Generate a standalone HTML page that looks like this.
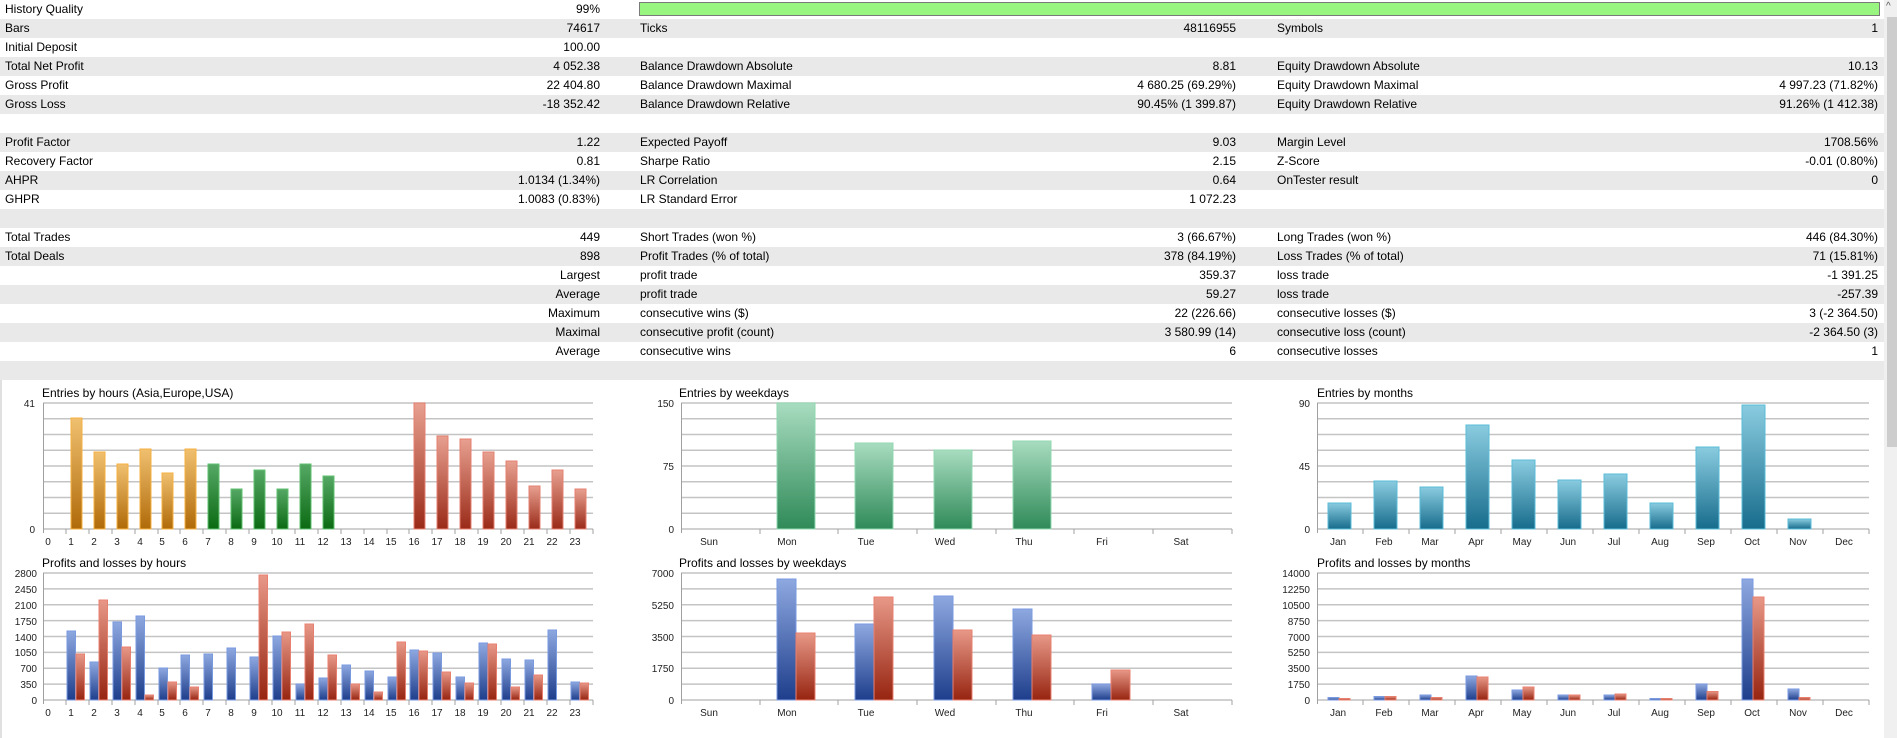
<!DOCTYPE html>
<html><head><meta charset="utf-8">
<style>
html,body{margin:0;padding:0;background:#fff;width:1897px;height:738px;overflow:hidden;font-family:"Liberation Sans",Arial,sans-serif;color:#000}
.tbl{position:absolute;left:0;top:0;width:1884px}
.r{position:relative;height:19px;font-size:12px;line-height:19px}
.r:nth-child(even){background:#e9e9e9}
.r span{position:absolute;white-space:nowrap}
.l1{left:5px}.v1{right:1284px;text-align:right}
.l2{left:640px}.v2{right:648px}
.l3{left:1277px}.v3{right:6px}
.sb{position:absolute;left:1884px;top:0;width:13px;height:738px;background:#f0f0f0}
.th{position:absolute;left:1887px;top:17px;width:10px;height:430px;background:#cdcdcd}
svg text{font-family:"Liberation Sans",Arial,sans-serif}
</style></head><body>
<div class="tbl">
<div class="r"><span class="l1">History Quality</span><span class="v1">99%</span></div>
<div class="r"><span class="l1">Bars</span><span class="v1">74617</span><span class="l2">Ticks</span><span class="v2">48116955</span><span class="l3">Symbols</span><span class="v3">1</span></div>
<div class="r"><span class="l1">Initial Deposit</span><span class="v1">100.00</span></div>
<div class="r"><span class="l1">Total Net Profit</span><span class="v1">4 052.38</span><span class="l2">Balance Drawdown Absolute</span><span class="v2">8.81</span><span class="l3">Equity Drawdown Absolute</span><span class="v3">10.13</span></div>
<div class="r"><span class="l1">Gross Profit</span><span class="v1">22 404.80</span><span class="l2">Balance Drawdown Maximal</span><span class="v2">4 680.25 (69.29%)</span><span class="l3">Equity Drawdown Maximal</span><span class="v3">4 997.23 (71.82%)</span></div>
<div class="r"><span class="l1">Gross Loss</span><span class="v1">-18 352.42</span><span class="l2">Balance Drawdown Relative</span><span class="v2">90.45% (1 399.87)</span><span class="l3">Equity Drawdown Relative</span><span class="v3">91.26% (1 412.38)</span></div>
<div class="r"></div>
<div class="r"><span class="l1">Profit Factor</span><span class="v1">1.22</span><span class="l2">Expected Payoff</span><span class="v2">9.03</span><span class="l3">Margin Level</span><span class="v3">1708.56%</span></div>
<div class="r"><span class="l1">Recovery Factor</span><span class="v1">0.81</span><span class="l2">Sharpe Ratio</span><span class="v2">2.15</span><span class="l3">Z-Score</span><span class="v3">-0.01 (0.80%)</span></div>
<div class="r"><span class="l1">AHPR</span><span class="v1">1.0134 (1.34%)</span><span class="l2">LR Correlation</span><span class="v2">0.64</span><span class="l3">OnTester result</span><span class="v3">0</span></div>
<div class="r"><span class="l1">GHPR</span><span class="v1">1.0083 (0.83%)</span><span class="l2">LR Standard Error</span><span class="v2">1 072.23</span></div>
<div class="r"></div>
<div class="r"><span class="l1">Total Trades</span><span class="v1">449</span><span class="l2">Short Trades (won %)</span><span class="v2">3 (66.67%)</span><span class="l3">Long Trades (won %)</span><span class="v3">446 (84.30%)</span></div>
<div class="r"><span class="l1">Total Deals</span><span class="v1">898</span><span class="l2">Profit Trades (% of total)</span><span class="v2">378 (84.19%)</span><span class="l3">Loss Trades (% of total)</span><span class="v3">71 (15.81%)</span></div>
<div class="r"><span class="v1">Largest</span><span class="l2">profit trade</span><span class="v2">359.37</span><span class="l3">loss trade</span><span class="v3">-1 391.25</span></div>
<div class="r"><span class="v1">Average</span><span class="l2">profit trade</span><span class="v2">59.27</span><span class="l3">loss trade</span><span class="v3">-257.39</span></div>
<div class="r"><span class="v1">Maximum</span><span class="l2">consecutive wins ($)</span><span class="v2">22 (226.66)</span><span class="l3">consecutive losses ($)</span><span class="v3">3 (-2 364.50)</span></div>
<div class="r"><span class="v1">Maximal</span><span class="l2">consecutive profit (count)</span><span class="v2">3 580.99 (14)</span><span class="l3">consecutive loss (count)</span><span class="v3">-2 364.50 (3)</span></div>
<div class="r"><span class="v1">Average</span><span class="l2">consecutive wins</span><span class="v2">6</span><span class="l3">consecutive losses</span><span class="v3">1</span></div>
<div class="r"></div>
</div>
<div style="position:absolute;left:639px;top:2px;width:1239px;height:12px;background:#98f57f;border:1px solid #7a7a7a"></div>
<div class="sb"></div><div class="th"></div>
<div style="position:absolute;left:1886px;top:1px;font-size:10px;color:#555">^</div>

<svg width="1884" height="738" style="position:absolute;left:0;top:0" xmlns="http://www.w3.org/2000/svg">
<defs>
<linearGradient id="go" x1="0" y1="0" x2="0" y2="1"><stop offset="0" stop-color="#f0c070"/><stop offset="1" stop-color="#b06a08"/></linearGradient>
<linearGradient id="gg" x1="0" y1="0" x2="0" y2="1"><stop offset="0" stop-color="#55a865"/><stop offset="1" stop-color="#0b6a12"/></linearGradient>
<linearGradient id="gr" x1="0" y1="0" x2="0" y2="1"><stop offset="0" stop-color="#e8a090"/><stop offset="1" stop-color="#9a2a18"/></linearGradient>
<linearGradient id="gb" x1="0" y1="0" x2="0" y2="1"><stop offset="0" stop-color="#8ea8e0"/><stop offset="1" stop-color="#1e3e8c"/></linearGradient>
<linearGradient id="gl" x1="0" y1="0" x2="0" y2="1"><stop offset="0" stop-color="#e89888"/><stop offset="1" stop-color="#962410"/></linearGradient>
<linearGradient id="gw" x1="0" y1="0" x2="0" y2="1"><stop offset="0" stop-color="#a8dcc0"/><stop offset="1" stop-color="#2f8a58"/></linearGradient>
<linearGradient id="gt" x1="0" y1="0" x2="0" y2="1"><stop offset="0" stop-color="#8acce0"/><stop offset="1" stop-color="#176c8c"/></linearGradient>
</defs>
<line x1="1" y1="380" x2="1" y2="738" stroke="#e0e0e0" stroke-width="2"/>

<g stroke="#c4c4c4" stroke-width="1.5">
<path d="M43 403H593M43 418.75H593M43 434.5H593M43 450.25H593M43 466H593M43 481.75H593M43 497.5H593M43 513.25H593"/>
<path d="M681 403H1232M681 418.75H1232M681 434.5H1232M681 450.25H1232M681 466H1232M681 481.75H1232M681 497.5H1232M681 513.25H1232"/>
<path d="M1317 403H1869M1317 418.75H1869M1317 434.5H1869M1317 450.25H1869M1317 466H1869M1317 481.75H1869M1317 497.5H1869M1317 513.25H1869"/>
<path d="M43 573H593M43 588.9H593M43 604.75H593M43 620.6H593M43 636.5H593M43 652.4H593M43 668.25H593M43 684.1H593"/>
<path d="M681 573H1232M681 588.9H1232M681 604.75H1232M681 620.6H1232M681 636.5H1232M681 652.4H1232M681 668.25H1232M681 684.1H1232"/>
<path d="M1317 573H1869M1317 588.9H1869M1317 604.75H1869M1317 620.6H1869M1317 636.5H1869M1317 652.4H1869M1317 668.25H1869M1317 684.1H1869"/>
</g>
<g stroke="#a0a0a0" stroke-width="1" fill="none">
<path d="M43.5 403V533M43 529H593M681.5 403V533M681 529H1232M1317.5 403V533M1317 529H1869"/>
<path d="M43.5 573V704M43 700H593M681.5 573V704M681 700H1232M1317.5 573V704M1317 700H1869"/>
<path d="M66 529v5M89 529v5M112 529v5M135 529v5M158 529v5M180 529v5M203 529v5M226 529v5M249 529v5M272 529v5M295 529v5M318 529v5M341 529v5M364 529v5M387 529v5M409 529v5M432 529v5M455 529v5M478 529v5M501 529v5M524 529v5M547 529v5M570 529v5M593 529v5"/>
<path d="M66 700v5M89 700v5M112 700v5M135 700v5M158 700v5M180 700v5M203 700v5M226 700v5M249 700v5M272 700v5M295 700v5M318 700v5M341 700v5M364 700v5M387 700v5M409 700v5M432 700v5M455 700v5M478 700v5M501 700v5M524 700v5M547 700v5M570 700v5M593 700v5"/>
<path d="M760 529v5M838 529v5M917 529v5M996 529v5M1074 529v5M1153 529v5M1232 529v5M760 700v5M838 700v5M917 700v5M996 700v5M1074 700v5M1153 700v5M1232 700v5"/>
<path d="M1363 529v5M1409 529v5M1455 529v5M1501 529v5M1547 529v5M1593 529v5M1639 529v5M1685 529v5M1731 529v5M1777 529v5M1823 529v5M1869 529v5M1363 700v5M1409 700v5M1455 700v5M1501 700v5M1547 700v5M1593 700v5M1639 700v5M1685 700v5M1731 700v5M1777 700v5M1823 700v5M1869 700v5"/>
</g>

<g font-size="12" fill="#000">
<text x="42" y="397">Entries by hours (Asia,Europe,USA)</text>
<text x="679" y="397">Entries by weekdays</text>
<text x="1317" y="397">Entries by months</text>
<text x="42" y="567">Profits and losses by hours</text>
<text x="679" y="567">Profits and losses by weekdays</text>
<text x="1317" y="567">Profits and losses by months</text>
</g>

<g font-size="10" fill="#222" text-anchor="end">
<text x="35" y="407">41</text><text x="35" y="533">0</text>
<text x="674" y="407">150</text><text x="674" y="470">75</text><text x="674" y="533">0</text>
<text x="1310" y="407">90</text><text x="1310" y="470">45</text><text x="1310" y="533">0</text>
<text x="37" y="577">2800</text><text x="37" y="593">2450</text><text x="37" y="609">2100</text><text x="37" y="625">1750</text><text x="37" y="641">1400</text><text x="37" y="656">1050</text><text x="37" y="672">700</text><text x="37" y="688">350</text><text x="37" y="704">0</text>
<text x="674" y="577">7000</text><text x="674" y="609">5250</text><text x="674" y="641">3500</text><text x="674" y="672">1750</text><text x="674" y="704">0</text>
<text x="1310" y="577">14000</text><text x="1310" y="593">12250</text><text x="1310" y="609">10500</text><text x="1310" y="625">8750</text><text x="1310" y="641">7000</text><text x="1310" y="656">5250</text><text x="1310" y="672">3500</text><text x="1310" y="688">1750</text><text x="1310" y="704">0</text>
</g>

<g font-size="10" fill="#222" text-anchor="middle">
<g>
<text x="48" y="545">0</text><text x="71" y="545">1</text><text x="94" y="545">2</text><text x="117" y="545">3</text><text x="140" y="545">4</text><text x="162" y="545">5</text><text x="185" y="545">6</text><text x="208" y="545">7</text><text x="231" y="545">8</text><text x="254" y="545">9</text><text x="277" y="545">10</text><text x="300" y="545">11</text><text x="323" y="545">12</text><text x="346" y="545">13</text><text x="369" y="545">14</text><text x="391" y="545">15</text><text x="414" y="545">16</text><text x="437" y="545">17</text><text x="460" y="545">18</text><text x="483" y="545">19</text><text x="506" y="545">20</text><text x="529" y="545">21</text><text x="552" y="545">22</text><text x="575" y="545">23</text>
</g>
<g transform="translate(0,171)">
<text x="48" y="545">0</text><text x="71" y="545">1</text><text x="94" y="545">2</text><text x="117" y="545">3</text><text x="140" y="545">4</text><text x="162" y="545">5</text><text x="185" y="545">6</text><text x="208" y="545">7</text><text x="231" y="545">8</text><text x="254" y="545">9</text><text x="277" y="545">10</text><text x="300" y="545">11</text><text x="323" y="545">12</text><text x="346" y="545">13</text><text x="369" y="545">14</text><text x="391" y="545">15</text><text x="414" y="545">16</text><text x="437" y="545">17</text><text x="460" y="545">18</text><text x="483" y="545">19</text><text x="506" y="545">20</text><text x="529" y="545">21</text><text x="552" y="545">22</text><text x="575" y="545">23</text>
</g>
<text x="709" y="545">Sun</text><text x="787" y="545">Mon</text><text x="866" y="545">Tue</text><text x="945" y="545">Wed</text><text x="1024" y="545">Thu</text><text x="1102" y="545">Fri</text><text x="1181" y="545">Sat</text>
<text x="709" y="716">Sun</text><text x="787" y="716">Mon</text><text x="866" y="716">Tue</text><text x="945" y="716">Wed</text><text x="1024" y="716">Thu</text><text x="1102" y="716">Fri</text><text x="1181" y="716">Sat</text>
<text x="1338" y="545">Jan</text><text x="1384" y="545">Feb</text><text x="1430" y="545">Mar</text><text x="1476" y="545">Apr</text><text x="1522" y="545">May</text><text x="1568" y="545">Jun</text><text x="1614" y="545">Jul</text><text x="1660" y="545">Aug</text><text x="1706" y="545">Sep</text><text x="1752" y="545">Oct</text><text x="1798" y="545">Nov</text><text x="1844" y="545">Dec</text>
<text x="1338" y="716">Jan</text><text x="1384" y="716">Feb</text><text x="1430" y="716">Mar</text><text x="1476" y="716">Apr</text><text x="1522" y="716">May</text><text x="1568" y="716">Jun</text><text x="1614" y="716">Jul</text><text x="1660" y="716">Aug</text><text x="1706" y="716">Sep</text><text x="1752" y="716">Oct</text><text x="1798" y="716">Nov</text><text x="1844" y="716">Dec</text>
</g>

<g fill="url(#go)" stroke="#f5b040" stroke-width="1">
<rect x="71" y="418" width="11" height="111"/><rect x="94" y="452" width="11" height="77"/><rect x="117" y="464" width="11" height="65"/><rect x="140" y="449" width="11" height="80"/><rect x="162" y="473" width="11" height="56"/><rect x="185" y="449" width="11" height="80"/>
</g>
<g fill="url(#gg)" stroke="#60c070" stroke-width="1">
<rect x="208" y="464" width="11" height="65"/><rect x="231" y="489" width="11" height="40"/><rect x="254" y="470" width="11" height="59"/><rect x="277" y="489" width="11" height="40"/><rect x="300" y="464" width="11" height="65"/><rect x="323" y="476" width="11" height="53"/>
</g>
<g fill="url(#gr)" stroke="#e58070" stroke-width="1">
<rect x="414" y="403" width="11" height="126"/><rect x="437" y="436" width="11" height="93"/><rect x="460" y="439" width="11" height="90"/><rect x="483" y="452" width="11" height="77"/><rect x="506" y="461" width="11" height="68"/><rect x="529" y="486" width="11" height="43"/><rect x="552" y="470" width="11" height="59"/><rect x="575" y="489" width="11" height="40"/>
</g>

<g fill="url(#gb)" stroke="#7a9ae0" stroke-width="1">
<rect x="67" y="631" width="8.5" height="69"/><rect x="90" y="662" width="8.5" height="38"/><rect x="113" y="622" width="8.5" height="78"/><rect x="136" y="616" width="8.5" height="84"/><rect x="159" y="668" width="8.5" height="32"/><rect x="181" y="655" width="8.5" height="45"/><rect x="204" y="654" width="8.5" height="46"/><rect x="227" y="648" width="8.5" height="52"/><rect x="250" y="657" width="8.5" height="43"/><rect x="273" y="636" width="8.5" height="64"/><rect x="296" y="684" width="8.5" height="16"/><rect x="319" y="678" width="8.5" height="22"/><rect x="342" y="665" width="8.5" height="35"/><rect x="365" y="671" width="8.5" height="29"/><rect x="388" y="677" width="8.5" height="23"/><rect x="410" y="650" width="8.5" height="50"/><rect x="433" y="653" width="8.5" height="47"/><rect x="456" y="677" width="8.5" height="23"/><rect x="479" y="643" width="8.5" height="57"/><rect x="502" y="659" width="8.5" height="41"/><rect x="525" y="660" width="8.5" height="40"/><rect x="548" y="630" width="8.5" height="70"/><rect x="571" y="682" width="8.5" height="18"/>
</g>
<g fill="url(#gl)" stroke="#e88070" stroke-width="1">
<rect x="76" y="654" width="8.5" height="46"/><rect x="99" y="600" width="8.5" height="100"/><rect x="122" y="647" width="8.5" height="53"/><rect x="145" y="695" width="8.5" height="5"/><rect x="168" y="682" width="8.5" height="18"/><rect x="190" y="687" width="8.5" height="13"/><rect x="259" y="575" width="8.5" height="125"/><rect x="282" y="632" width="8.5" height="68"/><rect x="305" y="624" width="8.5" height="76"/><rect x="328" y="655" width="8.5" height="45"/><rect x="351" y="684" width="8.5" height="16"/><rect x="374" y="692" width="8.5" height="8"/><rect x="397" y="642" width="8.5" height="58"/><rect x="419" y="651" width="8.5" height="49"/><rect x="442" y="672" width="8.5" height="28"/><rect x="465" y="683" width="8.5" height="17"/><rect x="488" y="644" width="8.5" height="56"/><rect x="511" y="687" width="8.5" height="13"/><rect x="534" y="675" width="8.5" height="25"/><rect x="580" y="683" width="8.5" height="17"/>
</g>

<g fill="url(#gw)" stroke="#90d8b0" stroke-width="1">
<rect x="777" y="403" width="38" height="126"/><rect x="855" y="443" width="38" height="86"/><rect x="934" y="450" width="38" height="79"/><rect x="1013" y="441" width="38" height="88"/>
</g>
<g fill="url(#gb)" stroke="#7a9ae0" stroke-width="1">
<rect x="777" y="579" width="19" height="121"/><rect x="855" y="624" width="19" height="76"/><rect x="934" y="596" width="19" height="104"/><rect x="1013" y="609" width="19" height="91"/><rect x="1092" y="684" width="19" height="16"/>
</g>
<g fill="url(#gl)" stroke="#e88070" stroke-width="1">
<rect x="796" y="633" width="19" height="67"/><rect x="874" y="597" width="19" height="103"/><rect x="953" y="630" width="19" height="70"/><rect x="1032" y="635" width="19" height="65"/><rect x="1111" y="670" width="19" height="30"/>
</g>

<g fill="url(#gt)" stroke="#5abcd8" stroke-width="1">
<rect x="1328" y="503" width="23" height="26"/><rect x="1374" y="481" width="23" height="48"/><rect x="1420" y="487" width="23" height="42"/><rect x="1466" y="425" width="23" height="104"/><rect x="1512" y="460" width="23" height="69"/><rect x="1558" y="480" width="23" height="49"/><rect x="1604" y="474" width="23" height="55"/><rect x="1650" y="503" width="23" height="26"/><rect x="1696" y="447" width="23" height="82"/><rect x="1742" y="405" width="23" height="124"/><rect x="1788" y="519" width="23" height="10"/>
</g>
<g fill="url(#gb)" stroke="#7a9ae0" stroke-width="1">
<rect x="1328" y="697.5" width="11" height="2.5"/><rect x="1374" y="696.5" width="11" height="3.5"/><rect x="1420" y="695" width="11" height="5"/><rect x="1466" y="676" width="11" height="24"/><rect x="1512" y="690" width="11" height="10"/><rect x="1558" y="695" width="11" height="5"/><rect x="1604" y="695" width="11" height="5"/><rect x="1650" y="698.5" width="11" height="1.5"/><rect x="1696" y="684" width="11" height="16"/><rect x="1742" y="579" width="11" height="121"/><rect x="1788" y="689" width="11" height="11"/>
</g>
<g fill="url(#gl)" stroke="#e88070" stroke-width="1">
<rect x="1339" y="698.5" width="11" height="1.5"/><rect x="1385" y="696.5" width="11" height="3.5"/><rect x="1431" y="697.5" width="11" height="2.5"/><rect x="1477" y="677" width="11" height="23"/><rect x="1523" y="687" width="11" height="13"/><rect x="1569" y="695" width="11" height="5"/><rect x="1615" y="694" width="11" height="6"/><rect x="1661" y="698.5" width="11" height="1.5"/><rect x="1707" y="691.5" width="11" height="8.5"/><rect x="1753" y="597" width="11" height="103"/><rect x="1799" y="697.5" width="11" height="2.5"/>
</g>
</svg>
</body></html>
